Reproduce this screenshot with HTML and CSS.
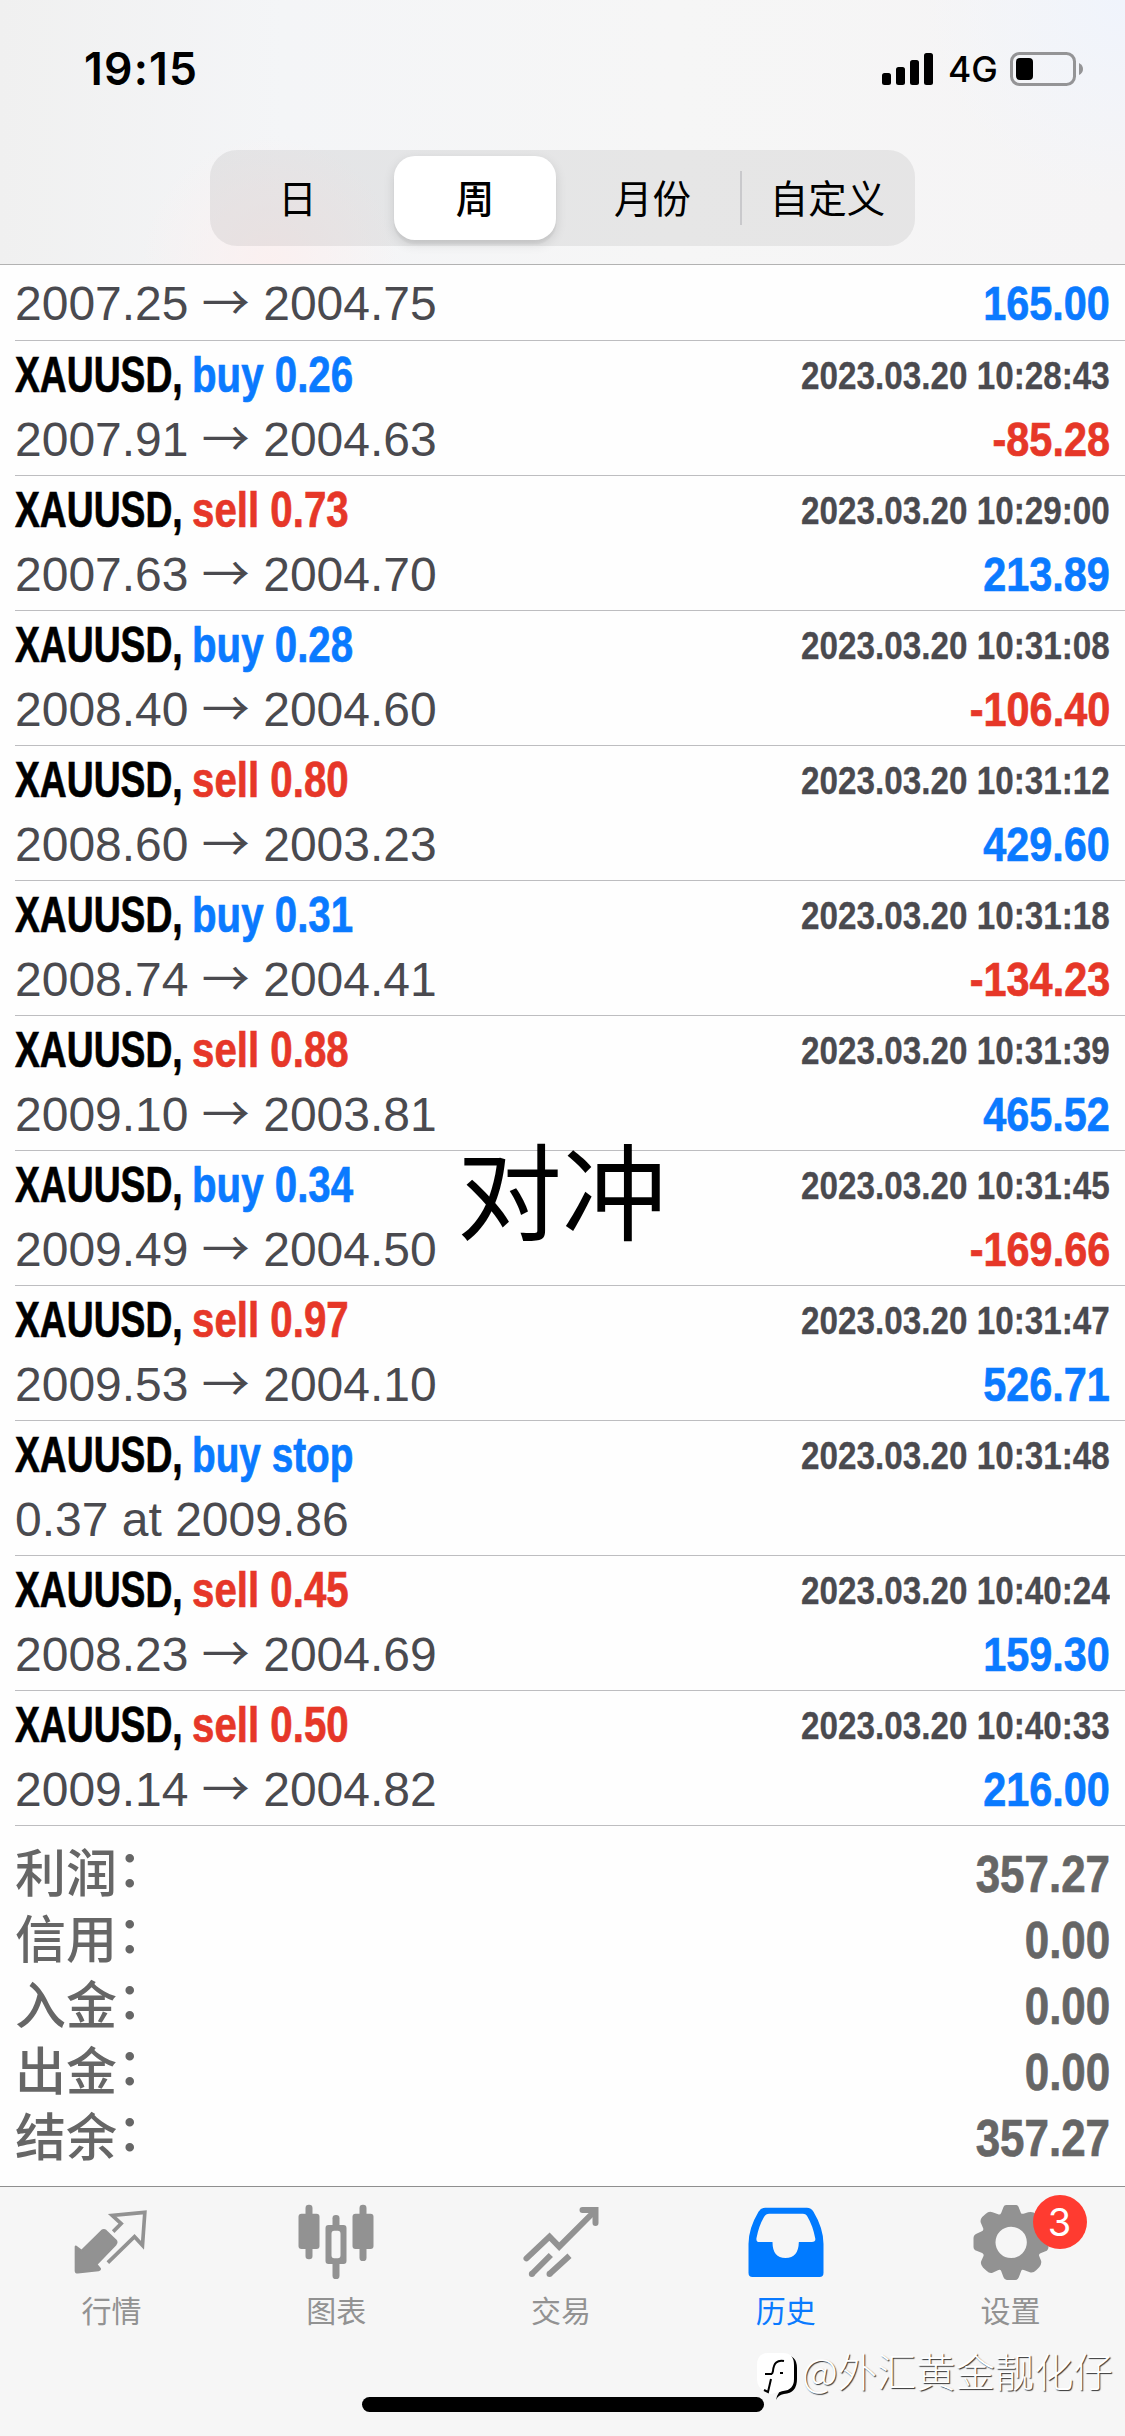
FILE: index.html
```html
<!DOCTYPE html>
<html lang="zh-CN">
<head>
<meta charset="utf-8">
<title>历史</title>
<link rel="stylesheet" href="styles.css">
</head>
<body>
<div class="screen">
  <header class="header">
    <div class="status">
      <span class="time">19:15</span>
      <div class="status-right">
        <svg class="signal" viewBox="0 0 37 32"><rect x="0" y="20" width="9" height="12" rx="2.5"/><rect x="14" y="14" width="9" height="18" rx="2.5"/><rect x="28" y="7" width="9" height="25" rx="2.5"/><rect x="42" y="0" width="9" height="32" rx="2.5"/></svg>
        <span class="network">4G</span>
        <svg class="battery" viewBox="0 0 74 34"><rect x="1.5" y="1.5" width="63" height="31" rx="8" fill="none" stroke="#949496" stroke-width="3"/><rect x="6" y="6" width="17" height="22" rx="4"/><path d="M69 11Q73 13 73 17T69 23Z" fill="#949496"/></svg>
      </div>
    </div>
    <nav class="segments">
      <span class="segment">日</span>
      <span class="segment selected">周</span>
      <span class="segment">月份</span>
      <span class="segment divided">自定义</span>
    </nav>
  </header>

  <main class="deals">
    <div class="deal clipped"><div class="line prices"><span>2007.25 <i class="arrow">→</i> 2004.75</span><b class="value buy">165.00</b></div></div>
    <div class="deal"><div class="line title"><span class="symbol"><b>XAUUSD,</b></span><b class="side buy">buy 0.26</b><b class="date">2023.03.20 10:28:43</b></div><div class="line prices"><span>2007.91 <i class="arrow">→</i> 2004.63</span><b class="value sell">-85.28</b></div></div>
    <div class="deal"><div class="line title"><span class="symbol"><b>XAUUSD,</b></span><b class="side sell">sell 0.73</b><b class="date">2023.03.20 10:29:00</b></div><div class="line prices"><span>2007.63 <i class="arrow">→</i> 2004.70</span><b class="value buy">213.89</b></div></div>
    <div class="deal"><div class="line title"><span class="symbol"><b>XAUUSD,</b></span><b class="side buy">buy 0.28</b><b class="date">2023.03.20 10:31:08</b></div><div class="line prices"><span>2008.40 <i class="arrow">→</i> 2004.60</span><b class="value sell">-106.40</b></div></div>
    <div class="deal"><div class="line title"><span class="symbol"><b>XAUUSD,</b></span><b class="side sell">sell 0.80</b><b class="date">2023.03.20 10:31:12</b></div><div class="line prices"><span>2008.60 <i class="arrow">→</i> 2003.23</span><b class="value buy">429.60</b></div></div>
    <div class="deal"><div class="line title"><span class="symbol"><b>XAUUSD,</b></span><b class="side buy">buy 0.31</b><b class="date">2023.03.20 10:31:18</b></div><div class="line prices"><span>2008.74 <i class="arrow">→</i> 2004.41</span><b class="value sell">-134.23</b></div></div>
    <div class="deal"><div class="line title"><span class="symbol"><b>XAUUSD,</b></span><b class="side sell">sell 0.88</b><b class="date">2023.03.20 10:31:39</b></div><div class="line prices"><span>2009.10 <i class="arrow">→</i> 2003.81</span><b class="value buy">465.52</b></div></div>
    <div class="deal"><div class="line title"><span class="symbol"><b>XAUUSD,</b></span><b class="side buy">buy 0.34</b><b class="date">2023.03.20 10:31:45</b></div><div class="line prices"><span>2009.49 <i class="arrow">→</i> 2004.50</span><b class="value sell">-169.66</b></div></div>
    <div class="deal"><div class="line title"><span class="symbol"><b>XAUUSD,</b></span><b class="side sell">sell 0.97</b><b class="date">2023.03.20 10:31:47</b></div><div class="line prices"><span>2009.53 <i class="arrow">→</i> 2004.10</span><b class="value buy">526.71</b></div></div>
    <div class="deal"><div class="line title"><span class="symbol"><b>XAUUSD,</b></span><b class="side order buy">buy stop</b><b class="date">2023.03.20 10:31:48</b></div><div class="line prices"><span>0.37 at 2009.86</span></div></div>
    <div class="deal"><div class="line title"><span class="symbol"><b>XAUUSD,</b></span><b class="side sell">sell 0.45</b><b class="date">2023.03.20 10:40:24</b></div><div class="line prices"><span>2008.23 <i class="arrow">→</i> 2004.69</span><b class="value buy">159.30</b></div></div>
    <div class="deal"><div class="line title"><span class="symbol"><b>XAUUSD,</b></span><b class="side sell">sell 0.50</b><b class="date">2023.03.20 10:40:33</b></div><div class="line prices"><span>2009.14 <i class="arrow">→</i> 2004.82</span><b class="value buy">216.00</b></div></div>
  </main>

  <section class="summary">
    <div class="total"><span class="label">利润<i class="colon">：</i></span><b>357.27</b></div>
    <div class="total"><span class="label">信用<i class="colon">：</i></span><b>0.00</b></div>
    <div class="total"><span class="label">入金<i class="colon">：</i></span><b>0.00</b></div>
    <div class="total"><span class="label">出金<i class="colon">：</i></span><b>0.00</b></div>
    <div class="total"><span class="label">结余<i class="colon">：</i></span><b>357.27</b></div>
  </section>

  <nav class="tabs">
    <div class="tab">
      <svg class="icon" viewBox="217.5 69 240 240">
        <path d="M229 203L246 216L307 156Q313 151 319 156L348 184Q353 190 348 196L290 256L301 269Q302 272 297 273L235 280Q229 280 229 275Z" stroke="#929292" stroke-width="7" stroke-linejoin="round" fill="#929292"/>
        <path d="M341 158L365 134L338 109L436 100L429 199L405 173L325 251" fill="none" stroke="#929292" stroke-width="11"/>
      </svg>
      <span>行情</span>
    </div>
    <div class="tab">
      <svg class="icon" viewBox="892.5 69 240 240" fill="#929292">
        <rect x="918" y="77" width="21" height="164" rx="10"/><rect x="897" y="104" width="63" height="106" rx="9"/>
        <rect x="1080" y="77" width="21" height="169" rx="10"/><rect x="1059" y="104" width="63" height="106" rx="9"/>
        <rect x="999" y="108" width="21" height="40" rx="10"/><rect x="999" y="240" width="21" height="60" rx="10"/>
        <path fill-rule="evenodd" d="M987 138h45q9 0 9 9v99q0 9-9 9h-45q-9 0-9-9v-99q0-9 9-9zM1004 155q-8 0-8 9v65q0 9 8 9h11q8 0 8-9v-65q0-9-8-9z"/>
      </svg>
      <span>图表</span>
    </div>
    <div class="tab">
      <svg class="icon" viewBox="427.5 69 240 240" fill="none" stroke="#929292" stroke-width="18">
        <path d="M441 238L510 173L539 203L646 96" stroke-linecap="round"/>
        <path d="M609 93H648V132" stroke-linecap="round"/>
        <path d="M514 228L457 285M570 230L510 285"/>
        <path d="M457 285h.1M510 285h.1" stroke-linecap="round"/>
      </svg>
      <span>交易</span>
    </div>
    <div class="tab active">
      <svg class="icon" viewBox="67.5 69 240 240">
        <path fill="#007aff" fill-rule="evenodd" d="M122 86H247Q260 86 267 98Q297 148 297 195V281Q297 294 285 294H84Q72 294 72 281V195Q72 148 102 98Q109 86 122 86ZM134 104Q124 104 119 113Q103 140 96 177Q94 189 105 189H144Q144 237 183 237Q222 237 223 189H262Q275 189 272 177Q265 140 249 113Q245 104 235 104Z"/>
      </svg>
      <span>历史</span>
    </div>
    <div class="tab">
      <div class="badged">
        <svg class="icon" viewBox="742.5 69 240 240">
          <path fill="#929292" fill-rule="evenodd" d="M845 78H875Q880 78 882 83L889 101Q891 106 897 104L911 100Q925 97 935 105Q949 114 949 128L944 147Q942 153 948 156L963 163Q972 167 972 176V203Q972 213 963 217L948 223Q942 226 944 231L950 246Q952 256 944 265L935 274Q926 283 916 280L898 273Q892 270 890 276L883 295Q880 303 872 303H847Q840 303 837 295L830 276Q828 271 822 273L804 281Q795 284 786 275L776 266Q767 257 770 247L777 231Q779 225 773 222L756 215Q747 212 747 203V177Q747 168 756 164L772 157Q778 154 776 148L769 131Q766 122 773 114L784 104Q794 95 804 100L821 106Q827 108 830 102L837 84Q839 78 845 78ZM860 143A47 47 0 1 0 860 237A47 47 0 1 0 860 143Z"/>
        </svg>
        <span class="badge">3</span>
      </div>
      <span>设置</span>
    </div>
  </nav>

  <div class="annotation">对冲</div>
  <div class="home-indicator"></div>
  <div class="watermark">
    <svg class="mark" viewBox="0 0 42 48">
      <path d="M14 3H28Q41 3 41 16V27Q41 41 28 42Q22 43 20 48Q22 38 28 38Q37 36 37 26V10Z" fill="#000"/>
      <path d="M12 1H27Q38 1 38 13V27Q38 38 27 39L15 42Q1 38 1 27V13Q1 1 12 1Z" fill="#fff"/>
      <path d="M28 9Q18 7 17 19L16 22M9 22H16M15 27L12 40L8 38" fill="none" stroke="#000" stroke-width="2"/><rect x="24" y="20" width="3" height="2"/>
    </svg>
    <span>@外汇黄金靓化仔</span>
  </div>
</div>
</body>
</html>
```
FILE: styles.css
```css
* { box-sizing: border-box; }

body {
  margin: 0;
  background: #fefefe;
  font-family: "Liberation Sans", "Noto Sans CJK SC", sans-serif;
  color: #000;
}

.screen {
  position: relative;
  width: 1125px;
  height: 2436px;
  display: flex;
  flex-direction: column;
  overflow: hidden;
}

i { font-style: normal; }

/* Header */
.header {
  height: 265px;
  border-bottom: 1px solid #b2b2b2;
  background:
    radial-gradient(circle at 270px 265px, #fbf0f0 0, rgba(251, 240, 240, 0) 130px),
    radial-gradient(circle at 1125px 0, #f0f4fc 0, rgba(240, 244, 252, 0) 200px),
    linear-gradient(90deg, #f0f0f0, #f4f5f7 25%, #f6f6f6 60%, #f5f4f5);
}

.status {
  height: 150px;
  padding: 0 41px 0 84px;
  display: flex;
  justify-content: space-between;
}

.time {
  margin-top: 42px;
  font: 600 44.5px/54px Inter, sans-serif;
  letter-spacing: 1.2px;
}

.status-right {
  display: flex;
  align-items: flex-start;
}

.signal {
  width: 37px;
  height: 32px;
  margin: 53px 29px 0 0;
  overflow: visible;
}

.network {
  width: 62px;
  margin-top: 49px;
  font: 500 35.5px/42px Inter, sans-serif;
}

.battery {
  width: 74px;
  height: 34px;
  margin-top: 52px;
}

.segments {
  width: 705px;
  height: 96px;
  margin-left: 210px;
  padding: 6px 0;
  display: flex;
  border-radius: 27px;
  background: rgba(118, 118, 118, 0.12);
}

.segment {
  flex: 1 1 0;
  display: flex;
  align-items: center;
  justify-content: center;
  padding-bottom: 4px;
  font: 400 38.5px/50px "Noto Sans CJK SC", sans-serif;
}

.segment.selected {
  flex: 0 0 162px;
  margin: 0 9px;
  border-radius: 21px;
  background: #fff;
  font-weight: 500;
  box-shadow: 0 4px 12px rgba(0, 0, 0, 0.12), 0 4px 2px rgba(0, 0, 0, 0.05);
}

.segment.divided {
  background: linear-gradient(#c9c9cc, #c9c9cc) 0 50% / 2px 54px no-repeat;
}

/* Deal rows */
.deal {
  height: 135px;
  margin-left: 15px;
  padding: 1px 15px 0 0;
  border-bottom: 1px solid #bdbdc0;
}

.deal.clipped {
  height: 76px;
  padding-top: 8px;
}

.line { display: flex; }

.line b { -webkit-text-stroke: 0.7px currentColor; }

.title {
  height: 67px;
  font-size: 50px;
  line-height: 67px;
}

.symbol {
  width: 177px;
  white-space: nowrap;
}

.symbol b,
.side {
  display: inline-block;
  transform: scaleX(0.745);
  transform-origin: 0 50%;
}

.side { transform: scaleX(0.805); }
.side.order { transform: scaleX(0.775); }

.buy { color: #0a7aff; }
.sell { color: #e63728; }

.line .date {
  margin-left: auto;
  color: #4a4a4f;
  font-size: 39.5px;
  line-height: 66px;
  transform: scaleX(0.842);
  transform-origin: 100% 50%;
  -webkit-text-stroke-width: 0.3px;
}

.prices {
  justify-content: space-between;
  height: 61px;
  font-size: 48px;
  line-height: 61px;
  color: #4a4a4f;
}

.arrow {
  font-family: "Noto Sans CJK SC", sans-serif;
  line-height: 1;
}

.value {
  font-size: 49px;
  transform: scaleX(0.845);
  transform-origin: 100% 50%;
}

/* Totals */
.summary {
  height: 360px;
  padding: 15px 15px 0;
  color: #666;
}

.total {
  height: 66px;
  display: flex;
  justify-content: space-between;
}

.total b {
  font-size: 52px;
  line-height: 66px;
  transform: scaleX(0.845);
  transform-origin: 100% 50%;
  -webkit-text-stroke: 0.7px currentColor;
}

.label {
  margin-top: -1px;
  font: 500 51px/58px "Noto Sans CJK SC", sans-serif;
}

.colon {
  line-height: 1;
  vertical-align: 5px;
}

/* Tab bar */
.tabs {
  flex: 1;
  display: flex;
  padding-right: 1px;
  border-top: 1px solid #8f8f8f;
  background: #f6f6f6;
}

.tab {
  flex: 1;
  padding-top: 15px;
  display: flex;
  flex-direction: column;
  align-items: center;
  gap: 10px;
  color: #929292;
  font: 400 30px/34px "Noto Sans CJK SC", sans-serif;
}

.tab.active { color: #0a7aff; }

.icon {
  display: block;
  width: 80px;
  height: 80px;
}

.tab > span { margin-right: 2px; }

.badged { position: relative; }

.badge {
  position: absolute;
  left: 61px;
  top: -7px;
  width: 54px;
  height: 54px;
  border-radius: 50%;
  background: #ff3b30;
  color: #fff;
  font: 400 38px/54px Inter, sans-serif;
  text-align: center;
}

/* Overlays */
.annotation {
  position: absolute;
  left: 457px;
  top: 1116px;
  font: 400 105px/140px "Noto Sans CJK SC", sans-serif;
}

.home-indicator {
  position: absolute;
  left: 362px;
  top: 2397px;
  width: 402px;
  height: 15px;
  border-radius: 8px;
  background: #000;
}

.watermark {
  position: absolute;
  left: 756px;
  top: 2352px;
  display: flex;
  gap: 4px;
  color: #fff;
  font: 300 39.3px/36px "Noto Sans CJK SC", sans-serif;
  text-shadow: 1px 1px 1px #333;
  white-space: nowrap;
}

.mark {
  width: 42px;
  height: 48px;
}
```
